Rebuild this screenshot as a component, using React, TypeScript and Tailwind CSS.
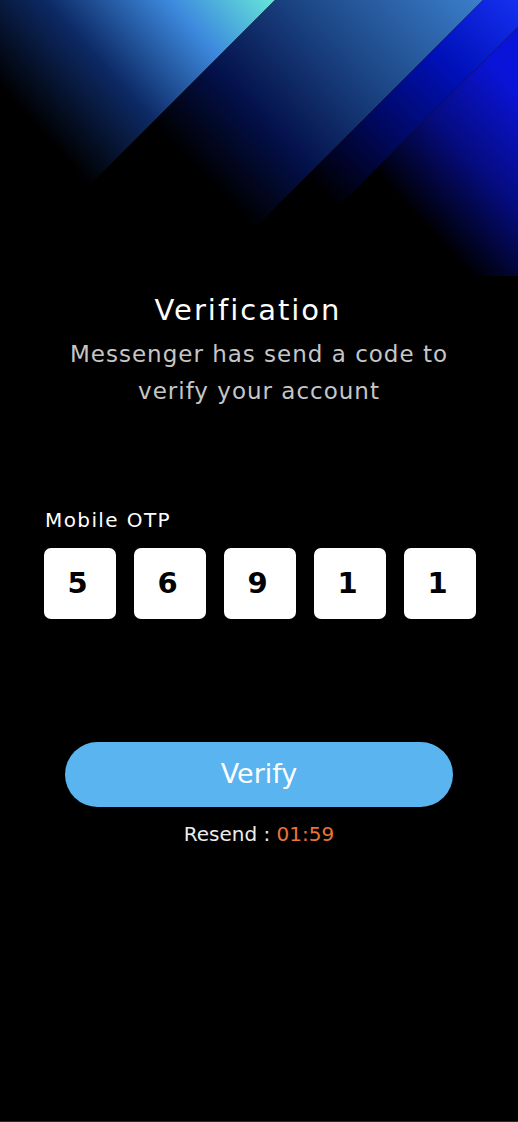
import React from 'react';

const OTP_DIGITS = ['5', '6', '9', '1', '1'];

const TopGlow: React.FC = () => (
    <svg className="absolute left-0 top-0" width="518" height="290" viewBox="0 0 518 290">
        <defs>
            <linearGradient id="band1" gradientUnits="userSpaceOnUse" x1="275" y1="0" x2="80" y2="175">
                <stop offset="0" stopColor="#66e6d8" />
                <stop offset="0.3" stopColor="#3d8ade" />
                <stop offset="0.65" stopColor="#0d2a66" />
                <stop offset="1" stopColor="#000000" />
            </linearGradient>
            <linearGradient id="band2" gradientUnits="userSpaceOnUse" x1="483" y1="0" x2="250" y2="225">
                <stop offset="0" stopColor="#3b7fcc" />
                <stop offset="0.4" stopColor="#1d4887" />
                <stop offset="0.75" stopColor="#03104a" />
                <stop offset="1" stopColor="#000000" />
            </linearGradient>
            <linearGradient id="band3" gradientUnits="userSpaceOnUse" x1="518" y1="0" x2="330" y2="200">
                <stop offset="0" stopColor="#1530f0" />
                <stop offset="0.35" stopColor="#0010b8" />
                <stop offset="0.7" stopColor="#000858" />
                <stop offset="1" stopColor="#000000" />
            </linearGradient>
            <linearGradient id="band4" gradientUnits="userSpaceOnUse" x1="518" y1="90" x2="400" y2="200">
                <stop offset="0" stopColor="#0a14d8" />
                <stop offset="0.5" stopColor="#050c80" />
                <stop offset="1" stopColor="#000000" />
            </linearGradient>
        </defs>
        <polygon points="0,0 275,0 90,185 0,185" fill="url(#band1)" />
        <polygon points="275,0 483,0 250,233 42,233" fill="url(#band2)" />
        <polygon points="483,0 518,0 518,27 340,205 278,205" fill="url(#band3)" />
        <polygon points="518,27 518,276 380,276 380,165" fill="url(#band4)" />
    </svg>
);

const App: React.FC = () => {
    return (
        <div
            className="relative min-h-[1122px] w-full overflow-hidden bg-black border-b border-[#2a2a2a]"
            style={{ fontFamily: '"DejaVu Sans", Inter, sans-serif' }}
        >
            <TopGlow />
            <div className="relative flex flex-col items-center pt-[288px]">
                <h1 className="pr-[22px] text-[29px] leading-[44px] tracking-[2px] text-white">Verification</h1>
                <p className="mt-[4px] text-center text-[23px] leading-[37px] tracking-[1px] text-[#c6c6c6]">
                    Messenger has send a code to
                    <br />
                    verify your account
                </p>

                <div className="mt-[95px] w-full pl-[44px] pr-[42px]">
                    <div className="pl-[1px] text-[20px] leading-[30px] tracking-[1.4px] text-white">Mobile OTP</div>
                    <div className="mt-[13px] flex gap-[18px]">
                        {OTP_DIGITS.map((d, i) => (
                            <div
                                key={i}
                                className="flex h-[71px] w-[72px] shrink-0 items-center justify-center rounded-[7px] bg-white pr-[5px] text-[29px] font-bold text-black"
                            >
                                {d}
                            </div>
                        ))}
                    </div>
                </div>

                <button className="mt-[123px] flex h-[65px] w-[388px] items-center justify-center rounded-full bg-[#5ab4f0] text-[27px] text-white">
                    Verify
                </button>
                <div className="mt-[13px] text-[20px] leading-[28px] text-[#ececec]">
                    Resend : <span className="text-[#ea7438]">01:59</span>
                </div>
            </div>
        </div>
    );
};

export default App;
